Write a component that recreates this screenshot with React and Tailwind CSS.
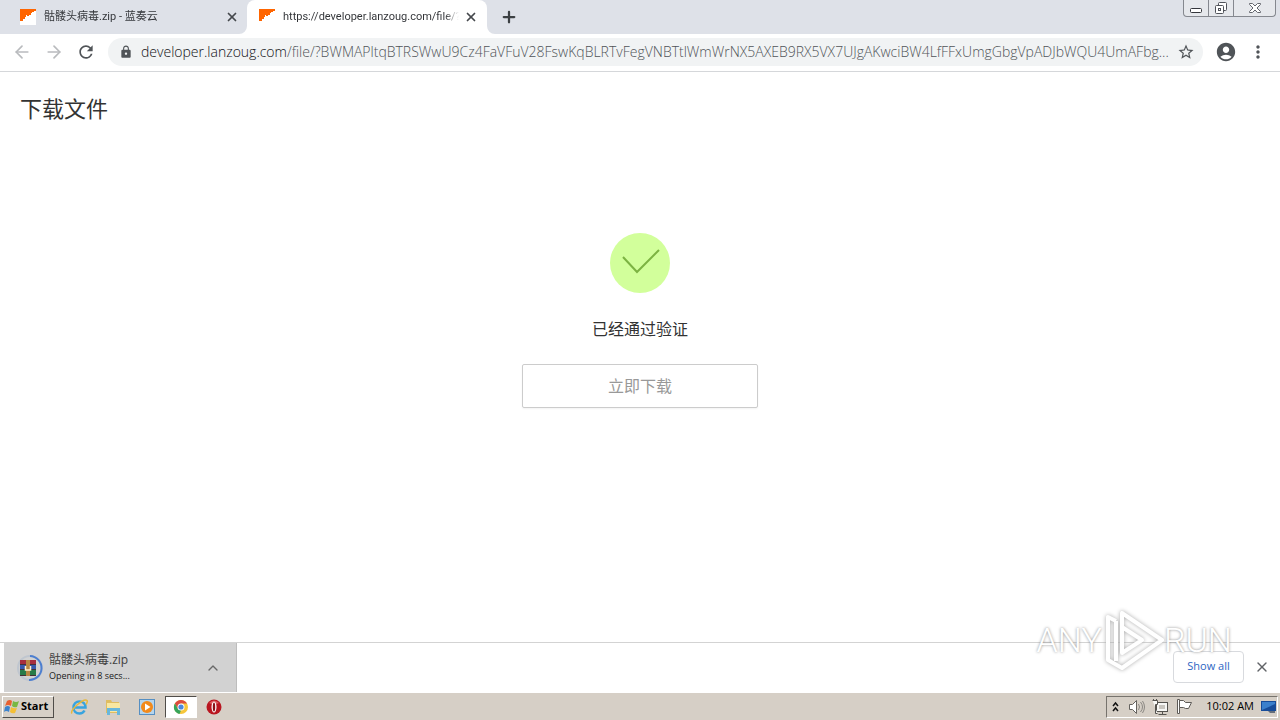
import { X, Plus, ArrowLeft, ArrowRight, ChevronUp } from 'lucide-react';
import { MdRefresh, MdLock, MdStarBorder, MdAccountCircle, MdMoreVert } from 'react-icons/md';

const URL_PATH =
  '/file/?BWMAPltqBTRSWwU9Cz4FaVFuV28FswKqBLRTvFegVNBTtlWmWrNX5AXEB9RX5VX7UJgAKwciBW4LfFFxUmgGbgVpADJbWQU4UmAFbg...';

const Favicon = () => (
  <svg className="shrink-0" width="16" height="16" viewBox="0 0 16 16">
    <rect width="16" height="16" fill="#fff" />
    <path d="M0 0h16v2h-2v1h-2v1h-1v2H9v1H7v-1H6v2H5v2H3v2H0z" fill="#ff6500" />
  </svg>
);

const Tab = ({ title, active }) => (
  <div
    className={
      active
        ? 'relative flex w-60 items-center rounded-t-lg bg-white pl-3 pr-2'
        : 'flex w-[247px] items-center pl-5 pr-[7px]'
    }
  >
    {active && (
      <>
        <svg className="absolute -left-2 bottom-0" width="8" height="8" viewBox="0 0 8 8">
          <path d="M8 0v8H0a8 8 0 0 0 8-8" fill="#fff" />
        </svg>
        <svg className="absolute -right-2 bottom-0" width="8" height="8" viewBox="0 0 8 8">
          <path d="M0 0v8h8a8 8 0 0 1-8-8" fill="#fff" />
        </svg>
      </>
    )}
    <Favicon />
    <a
      href="#tab"
      className="ml-2 min-w-0 flex-1 overflow-hidden whitespace-nowrap bg-linear-to-r from-[#303236] from-92% to-transparent bg-clip-text font-[Roboto,'Noto_Sans_CJK_SC',sans-serif] text-[11px] text-transparent"
    >
      {title}
    </a>
    <button aria-label="Close tab" className="ml-1 flex size-4 items-center justify-center text-[#45484c]">
      <X size={14} strokeWidth={3} />
    </button>
  </div>
);

const WindowControls = () => (
  <div className="ml-auto mr-1 flex h-[17px] rounded-b border border-t-0 border-[#85888f] bg-[#e6e8ec]">
    <button aria-label="Minimize" className="flex w-[25px] items-center justify-center border-r border-[#85888f]">
      <svg width="14" height="12" viewBox="0 0 14 12">
        <rect x="1.5" y="6.5" width="11" height="4" rx="1" fill="#fff" stroke="#34363c" />
      </svg>
    </button>
    <button aria-label="Restore" className="flex w-[25px] items-center justify-center border-r border-[#85888f]">
      <svg width="14" height="14" viewBox="0 0 14 14" fill="#fff" stroke="#50535a">
        <rect x="4.5" y="1.5" width="8" height="8" rx="1" />
        <rect x="1.5" y="4.5" width="8" height="8" rx="1" />
        <rect x="4.5" y="7.5" width="2" height="2" />
      </svg>
    </button>
    <button aria-label="Close" className="flex w-[41px] items-center justify-center">
      <svg width="14" height="12" viewBox="0 0 14 12" fill="#fff" stroke="#64676e">
        <path d="M1.500 1.500h3L7 4l2.500-2.500h3v1L9 6l3.500 3.500v1h-3L7 8l-2.500 2.500h-3v-1L5 6 1.500 2.500z" />
      </svg>
    </button>
  </div>
);

const Toolbar = () => (
  <div className="flex h-[38px] shrink-0 items-center border-b border-[#d5d7da] bg-white pb-px text-[#505458]">
    <button aria-label="Back" className="ml-3 text-[#b9bbbe]">
      <ArrowLeft size={20} />
    </button>
    <button aria-label="Forward" className="ml-3 text-[#b9bbbe]">
      <ArrowRight size={20} />
    </button>
    <button aria-label="Reload" className="ml-3">
      <MdRefresh size={20} />
    </button>
    <div className="ml-3 flex h-7 min-w-0 flex-1 items-center rounded-full bg-[#f1f3f4] pl-[11px] pr-2">
      <MdLock size={14} className="shrink-0" />
      <a href="#address" className="ml-2 min-w-0 flex-1 truncate text-sm font-light">
        <span className="text-[#101114]">developer.lanzoug.com</span>
        {URL_PATH}
      </a>
      <button aria-label="Bookmark this page" className="ml-1">
        <MdStarBorder size={18} />
      </button>
    </div>
    <button aria-label="Profile" className="ml-3">
      <MdAccountCircle size={22} />
    </button>
    <button aria-label="Menu" className="ml-[11px] mr-3">
      <MdMoreVert size={20} />
    </button>
  </div>
);

const ArchiveIcon = () => (
  <svg width="28" height="28" viewBox="0 0 28 28">
    <circle cx="14" cy="14" r="12" fill="none" stroke="#bfc6cf" strokeWidth="2" />
    <path d="M14 2a12 12 0 1 1-1 24" fill="none" stroke="#4d7fd0" strokeWidth="2" />
    <rect x="4" y="6" width="16" height="5" fill="#a72d3e" />
    <rect x="4" y="11" width="16" height="5" fill="#3859ac" />
    <rect x="4" y="16" width="16" height="6" fill="#287b49" />
    <path d="M4 10.500h16M4 15.500h16M4 21.500h16" stroke="#453038" />
    <rect x="10" y="6" width="4" height="16" fill="#b98743" />
    <path d="M9.500 12v4h5v-4" fill="none" stroke="#fff2cf" strokeWidth="1.500" />
  </svg>
);

const DownloadBar = () => (
  <div className="flex h-[50px] shrink-0 items-center border-t border-[#d3d3d3] bg-white">
    <div className="ml-1 flex h-full w-[233px] items-center border-r border-[#bdbdbd] bg-[#d2d2d2] pl-3">
      <ArchiveIcon />
      <div className="ml-[5px] flex-1">
        <p className="text-xs leading-4 text-[#404040]">骷髅头病毒.zip</p>
        <p className="text-[9px] leading-4 text-[#202020]">Opening in 8 secs...</p>
      </div>
      <button aria-label="Download options" className="mr-[15px] text-[#686868]">
        <ChevronUp size={16} />
      </button>
    </div>
    <div className="ml-auto flex items-center pb-0.5">
      <button className="h-8 w-[71px] rounded border border-[#d8dade] bg-white text-[11px] text-[#2c66c3]">
        Show all
      </button>
      <button aria-label="Close downloads" className="mx-2 flex size-5 items-center justify-center text-[#606367]">
        <X size={16} strokeWidth={2} />
      </button>
    </div>
  </div>
);

const StartFlag = () => (
  <svg width="16" height="16" viewBox="0 0 16 16">
    <path d="M3 2q3-2 5 0L7 7Q4 5 1 7z" fill="#e96131" />
    <path d="M9 2q3 2 6 0l-2 6q-3 1-5-1z" fill="#78b843" />
    <path d="M1 8q3-2 5 0l-1 5q-3-2-5 0z" fill="#3d83cd" />
    <path d="M7 8q3 2 6 1l-2 5q-3 1-5-1z" fill="#f4bf36" />
  </svg>
);

const ExplorerE = () => (
  <svg width="18" height="18" viewBox="0 0 18 18" fill="none">
    <path d="M14.500 12.500c-1 2-3 3-5 3-3.500 0-6-2.500-6-6s2.500-6 6-6 6 2.500 6 6H5" stroke="#38a4df" strokeWidth="2.500" />
    <path d="M2 15.500c-3-3 12-16 15-13 .8 1 0 2.500-1 4" stroke="#e7b83c" strokeWidth="1.500" />
  </svg>
);

const FolderIcon = () => (
  <svg width="18" height="18" viewBox="0 0 18 18">
    <path d="M2 2h5l1 2h7v11H2z" fill="#dfbd61" />
    <path d="M3 5h13v9H3z" fill="#f8e7a1" />
    <path d="M3 10h13v7h-3v-4H6v4H3z" fill="#68b7dc" />
  </svg>
);

const PlayerIcon = () => (
  <svg width="18" height="18" viewBox="0 0 18 18">
    <rect x="1.500" y="1.500" width="15" height="15" fill="#b5d5ed" stroke="#568fc2" />
    <circle cx="9" cy="9" r="6" fill="#f28a1b" />
    <path d="M7 5.500 12.500 9 7 12.500z" fill="#fff" />
  </svg>
);

const ChromeIcon = () => (
  <svg width="16" height="16" viewBox="0 0 16 16">
    <circle cx="8" cy="8" r="7" fill="#f6c63b" />
    <path d="M1.900 4.500A7 7 0 0 1 14 4.500H8L5 10z" fill="#dc4b3e" />
    <path d="M1.900 4.500 5 10l3 1.500L6.500 15A7 7 0 0 1 1.900 4.500" fill="#36a45a" />
    <circle cx="8" cy="8" r="3.500" fill="#fff" />
    <circle cx="8" cy="8" r="2.600" fill="#4a88dd" />
  </svg>
);

const OperaIcon = () => (
  <svg width="16" height="16" viewBox="0 0 16 16">
    <circle cx="8" cy="8" r="7.500" fill="#b91620" />
    <path d="M3 4Q8-1 13 4L8 6z" fill="#dd5a5e" />
    <ellipse cx="8" cy="8" rx="2.500" ry="5.500" fill="#fff" />
    <ellipse cx="8" cy="8" rx="1.200" ry="4.500" fill="#8c1118" />
  </svg>
);

const Tray = () => (
  <div className="ml-auto mr-0.5 flex h-[22px] items-center border border-b-white border-l-[#77736d] border-r-white border-t-[#77736d] pl-1">
    <svg width="9" height="12" viewBox="0 0 9 12" fill="none" stroke="#111" strokeWidth="1.500">
      <path d="m2 5 2.500-3L7 5M2 10l2.500-3L7 10" />
    </svg>
    <svg className="ml-2" width="18" height="18" viewBox="0 0 18 18" fill="#fff" stroke="#65625e">
      <path d="M1.500 6.500h3l4-4v13l-4-4h-3z" />
      <path d="M10.500 6q2 3 0 6M12.500 4q4 5 0 10M14.500 3q4 6 0 12" fill="none" stroke="#8b8883" />
    </svg>
    <svg className="ml-1.5" width="18" height="18" viewBox="0 0 18 18" fill="#f7f7f5" stroke="#55534f">
      <rect x="4.500" y="4.500" width="11" height="9" />
      <rect x="7" y="7" width="6" height="4" fill="#c9c6c0" stroke="none" />
      <path d="M6.500 16.500h8M10.500 14v2" />
      <path d="M.5 2.500h5v4h-2v9h2M1.500 1v2M4.500 1v2" />
    </svg>
    <svg className="ml-1.5" width="18" height="18" viewBox="0 0 18 18" fill="#fff" stroke="#5e5b57">
      <path d="M1.500 1.500h2v14h-2z" />
      <path d="M3.500 2.500h4l2 2h6l-3 6h-3l-2-1h-4z" />
    </svg>
    <time className="ml-3 whitespace-nowrap text-[11px] text-black">10:02 AM</time>
    <svg className="ml-[7px]" width="16" height="16" viewBox="0 0 16 16">
      <path d="M0 2h15v10H0z" fill="#174c99" />
      <path d="M1 3h13v2L1 11z" fill="#3b80cc" />
      <path d="M7 12h7v2H9z" fill="#646e7b" />
    </svg>
  </div>
);

const Taskbar = () => (
  <div className="flex h-7 shrink-0 items-center border-t border-white bg-[#d6cfc6]">
    <button className="ml-0.5 flex h-[22px] w-[52px] items-center gap-px border border-b-[#504d49] border-l-white border-r-[#504d49] border-t-white pl-px text-[11px] font-bold text-black">
      <StartFlag />
      Start
    </button>
    <div className="ml-4 flex items-center gap-4">
      <button aria-label="Internet Explorer"><ExplorerE /></button>
      <button aria-label="Windows Explorer"><FolderIcon /></button>
      <button aria-label="Media Player"><PlayerIcon /></button>
    </div>
    <button
      aria-label="Chrome"
      className="ml-[9px] flex h-[22px] w-8 items-center justify-center border border-b-white border-l-[#504d49] border-r-white border-t-[#504d49] bg-white"
    >
      <ChromeIcon />
    </button>
    <button aria-label="Opera" className="ml-[9px]"><OperaIcon /></button>
    <Tray />
  </div>
);

const Watermark = () => (
  <div className="pointer-events-none absolute bottom-12 right-12 flex items-center font-[Roboto,sans-serif] text-[34px] font-light text-white [text-shadow:0_0_3px_#888]">
    <span>ANY</span>
    <svg
      width="62"
      height="64"
      viewBox="0 0 62 64"
      fill="none"
      stroke="#fff"
      strokeWidth="4"
      strokeLinejoin="round"
      className="drop-shadow-[0_0_2px_#aaa]"
    >
      <path d="M14 13 6 9v43l14 8 40-28L20 5v40l20-13-20-13" />
      <path d="M14 13v40" />
    </svg>
    <span>RUN</span>
  </div>
);

export default function App() {
  return (
    <div className="relative flex h-screen flex-col overflow-hidden bg-white font-['Open_Sans','Noto_Sans_CJK_SC',sans-serif]">
      <div className="flex h-[34px] shrink-0 bg-[#dee1e8]">
        <Tab title="骷髅头病毒.zip - 蓝奏云" />
        <Tab title="https://developer.lanzoug.com/file/?" active />
        <button aria-label="New tab" className="ml-[13px] self-center text-[#3c4043]">
          <Plus size={18} strokeWidth={3} />
        </button>
        <WindowControls />
      </div>
      <Toolbar />
      <main className="flex-1">
        <h1 className="px-5 pt-5 text-[22px] leading-8 text-[#333]">下载文件</h1>
        <div className="mt-[109px] flex flex-col items-center">
          <svg width="60" height="60" viewBox="0 0 60 60">
            <circle cx="30" cy="30" r="30" fill="#d2ff9b" />
            <path d="m13 24 14 15 22-22" fill="none" stroke="#7cb342" strokeWidth="2" />
          </svg>
          <p className="mt-6 text-base text-[#333]">已经通过验证</p>
          <button className="mt-[23px] h-11 w-[236px] rounded-xs border border-[#ccc] bg-white text-base text-[#999] shadow-xs">
            立即下载
          </button>
        </div>
      </main>
      <DownloadBar />
      <Taskbar />
      <Watermark />
    </div>
  );
}
